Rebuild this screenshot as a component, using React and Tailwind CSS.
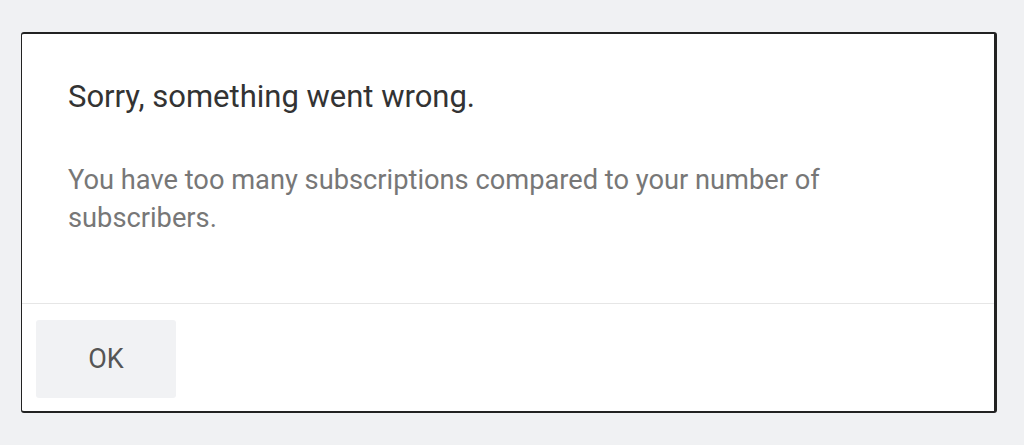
import React from "react";

const ErrorDialog = () => {
  return (
    <div className="min-h-[445px] w-full bg-[#f0f1f3] pt-8 pl-[21px] pr-[27px] font-['Roboto',sans-serif]">
      <div className="h-[381px] bg-white border-2 border-l border-r-[3px] border-[#222] rounded-[3px] flex flex-col">
        {/* Body */}
        <div className="flex-1 pl-[46px] pr-10 pt-[47px]">
          <h2 className="text-[31px] leading-none text-[#333]">
            Sorry, something went wrong.
          </h2>
          <p className="mt-[49px] max-w-[790px] text-[27.25px] leading-[38px] text-[#777]">
            You have too many subscriptions compared to your number of subscribers.
          </p>
        </div>

        {/* Footer */}
        <div className="h-[108px] border-t border-[#e6e6e6] pl-[14px] pt-4">
          <button className="w-[140px] h-[78px] bg-[#f1f2f4] rounded-[3px] text-[27px] text-[#555]">
            OK
          </button>
        </div>
      </div>
    </div>
  );
};

export default function App() {
  return <ErrorDialog />;
}
